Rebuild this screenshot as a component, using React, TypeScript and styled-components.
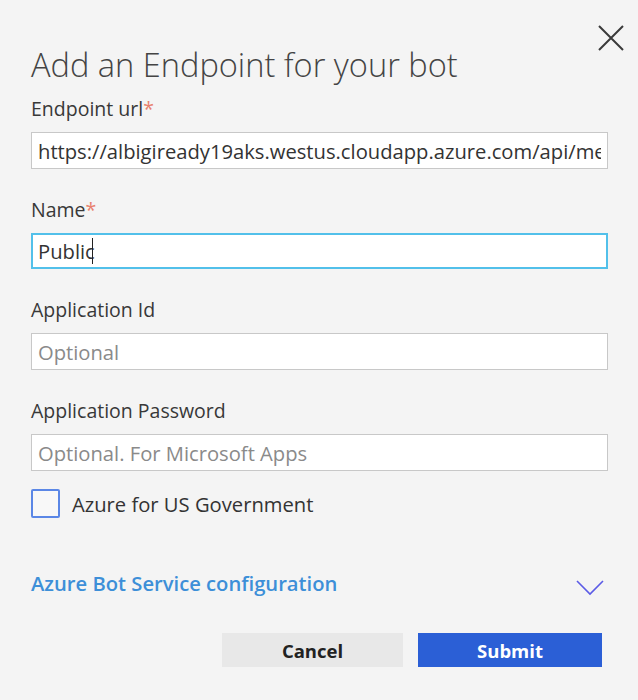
import styled, { createGlobalStyle } from "styled-components";

const GlobalStyle = createGlobalStyle`
	html, body {
		margin: 0;
		padding: 0;
		background: #f4f4f4;
	}

	body {
		font-family: "Open Sans", "Noto Sans", sans-serif;
		color: #333;
	}

	* {
		box-sizing: border-box;
	}
`;

const App = () => {
	return (
		<>
			<GlobalStyle />
			<StyledDialog>
				<StyledCloseButton aria-label="Close">
					<svg width="26" height="26" viewBox="0 0 26 26">
						<path d="M1 1 L25 25 M25 1 L1 25" stroke="#3a3a3a" strokeWidth="2" fill="none" />
					</svg>
				</StyledCloseButton>
				<StyledTitle>Add an Endpoint for your bot</StyledTitle>

				<StyledField>
					<StyledLabel>
						Endpoint url<StyledRequired>*</StyledRequired>
					</StyledLabel>
					<StyledInput
						readOnly
						value="https://albigiready19aks.westus.cloudapp.azure.com/api/messages"
					/>
				</StyledField>

				<StyledField>
					<StyledLabel>
						Name<StyledRequired>*</StyledRequired>
					</StyledLabel>
					<StyledFocusedInput>
						Public
						<StyledCaret />
					</StyledFocusedInput>
				</StyledField>

				<StyledField>
					<StyledLabel>Application Id</StyledLabel>
					<StyledInput placeholder="Optional" />
				</StyledField>

				<StyledField>
					<StyledLabel>Application Password</StyledLabel>
					<StyledInput placeholder="Optional. For Microsoft Apps" />
				</StyledField>

				<StyledCheckRow>
					<StyledCheckBox />
					<StyledCheckLabel>Azure for US Government</StyledCheckLabel>
				</StyledCheckRow>

				<StyledConfigRow>
					<StyledConfigLink>Azure Bot Service configuration</StyledConfigLink>
					<StyledChevron width="28" height="16" viewBox="0 0 28 16">
						<path d="M1 1 L14 14 L27 1" stroke="#5b5be6" strokeWidth="1.6" fill="none" />
					</StyledChevron>
				</StyledConfigRow>

				<StyledButtonRow>
					<StyledButton>Cancel</StyledButton>
					<StyledButton $primary>Submit</StyledButton>
				</StyledButtonRow>
			</StyledDialog>
		</>
	);
};

export default App;

const StyledDialog = styled.div`
	position: relative;
	width: 638px;
	height: 700px;
	padding: 45px 30px 0 31px;
	display: flex;
	flex-direction: column;
`;

const StyledCloseButton = styled.button`
	position: absolute;
	top: 25px;
	right: 14px;
	padding: 0;
	border: none;
	background: none;
	display: flex;
`;

const StyledTitle = styled.h1`
	margin: 0;
	font-size: 32.6px;
	line-height: 40px;
	font-weight: 300;
	color: #444;
`;

const StyledField = styled.div`
	display: flex;
	flex-direction: column;
	gap: 11px;
	margin-top: 12px;

	& + & {
		margin-top: 29px;
	}
`;

const StyledLabel = styled.label`
	font-size: 19.5px;
	line-height: 24px;
	color: #383838;
`;

const StyledRequired = styled.span`
	color: #e8806e;
`;

const StyledInput = styled.input`
	width: 100%;
	height: 37px;
	padding: 0 6px;
	border: 1px solid #c8c8c8;
	background: #fff;
	font-family: "Open Sans", "Noto Sans", sans-serif;
	font-size: 20.2px;
	color: #333;
	outline: none;

	&::placeholder {
		color: #8a8a8a;
	}
`;

const StyledFocusedInput = styled.div`
	width: 100%;
	height: 36px;
	padding: 0 5px;
	border: 2px solid #52c0ea;
	background: #fff;
	font-size: 20.2px;
	color: #333;
	display: flex;
	align-items: center;
`;

const StyledCaret = styled.span`
	width: 1px;
	height: 26px;
	margin-left: -3px;
	background: #222;
`;

const StyledCheckRow = styled.div`
	display: flex;
	align-items: center;
	gap: 12px;
	margin-top: 18px;
`;

const StyledCheckBox = styled.span`
	width: 29px;
	height: 29px;
	border: 2px solid #5b87e6;
	border-radius: 2px;
	background: #f8f8f8;
`;

const StyledCheckLabel = styled.span`
	font-size: 20.2px;
	color: #333;
`;

const StyledConfigRow = styled.div`
	display: flex;
	justify-content: space-between;
	align-items: center;
	margin-top: 52px;
	padding-right: 4px;
`;

const StyledConfigLink = styled.a`
	font-size: 20.2px;
	line-height: 24px;
	font-weight: 600;
	color: #3d8fd8;
	cursor: pointer;
`;

const StyledChevron = styled.svg`
	margin-top: 10px;
`;

const StyledButtonRow = styled.div`
	display: flex;
	justify-content: flex-end;
	gap: 15px;
	margin-top: 37px;
	padding-right: 6px;
`;

const StyledButton = styled.button<{ $primary?: boolean }>`
	width: ${(p) => (p.$primary ? "184px" : "181px")};
	height: 34px;
	border: none;
	background: ${(p) => (p.$primary ? "#2b5fd6" : "#e8e8e8")};
	color: ${(p) => (p.$primary ? "#fff" : "#222")};
	font-family: "Open Sans", "Noto Sans", sans-serif;
	font-size: 18.5px;
	font-weight: 700;
	cursor: pointer;
`;
